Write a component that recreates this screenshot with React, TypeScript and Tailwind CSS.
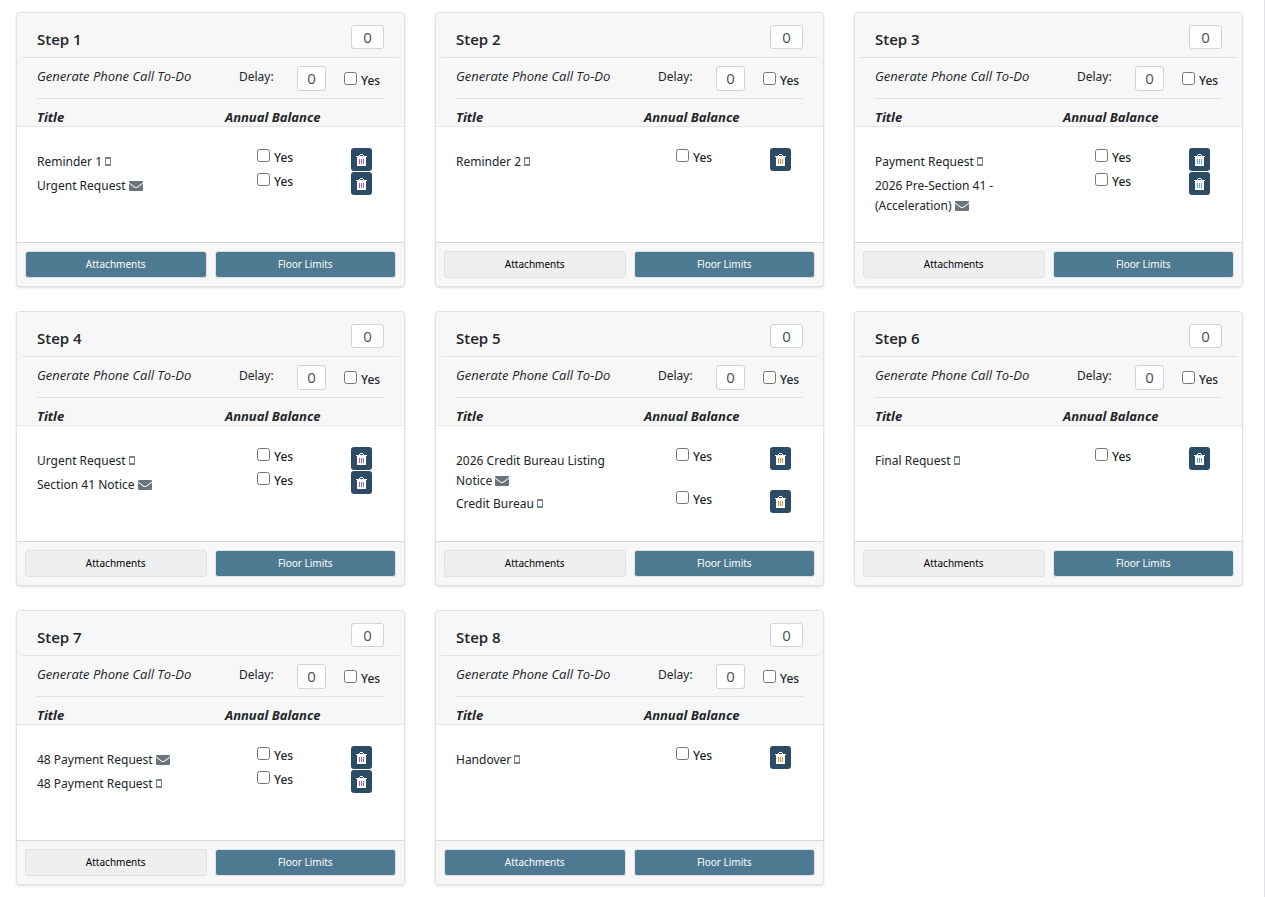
import { useState } from 'react';

type Channel = 'sms' | 'email';

interface Notice {
  title: string;
  channel: Channel;
}

interface Step {
  id: number;
  hasAttachments: boolean;
  notices: Notice[];
}

const steps: Step[] = [
  {
    id: 1,
    hasAttachments: true,
    notices: [
      { title: 'Reminder 1', channel: 'sms' },
      { title: 'Urgent Request', channel: 'email' },
    ],
  },
  {
    id: 2,
    hasAttachments: false,
    notices: [{ title: 'Reminder 2', channel: 'sms' }],
  },
  {
    id: 3,
    hasAttachments: false,
    notices: [
      { title: 'Payment Request', channel: 'sms' },
      { title: '2026 Pre-Section 41 - (Acceleration)', channel: 'email' },
    ],
  },
  {
    id: 4,
    hasAttachments: false,
    notices: [
      { title: 'Urgent Request', channel: 'sms' },
      { title: 'Section 41 Notice', channel: 'email' },
    ],
  },
  {
    id: 5,
    hasAttachments: false,
    notices: [
      { title: '2026 Credit Bureau Listing Notice', channel: 'email' },
      { title: 'Credit Bureau', channel: 'sms' },
    ],
  },
  {
    id: 6,
    hasAttachments: false,
    notices: [{ title: 'Final Request', channel: 'sms' }],
  },
  {
    id: 7,
    hasAttachments: false,
    notices: [
      { title: '48 Payment Request', channel: 'email' },
      { title: '48 Payment Request', channel: 'sms' },
    ],
  },
  {
    id: 8,
    hasAttachments: true,
    notices: [{ title: 'Handover', channel: 'sms' }],
  },
];

// Slat colour of the trash icon, one per grid column
const slatColors = ['#a05cbc', '#e0913c', '#5ea6d8'];

function TrashIcon({ slat }: { slat: string }) {
  return (
    <svg width="11" height="12" viewBox="0 0 11 12" shapeRendering="crispEdges" aria-hidden="true">
      <path d="M3 2V1h1V0h3v1h1v1h3v1H0V2zM4 1v1h3V1z" fill="#fff" fillRule="evenodd" />
      <path d="M1 3h9v9H1z" fill="#fff" />
      <path d="M3 5h1v5H3zM5 5h1v5H5zM7 5h1v5H7z" fill={slat} />
    </svg>
  );
}

function ChannelIcon({ channel }: { channel: Channel }) {
  if (channel === 'email') {
    return (
      <svg className="inline align-[-1px]" width="14" height="10" viewBox="0 0 14 10" aria-hidden="true">
        <path d="M0 1q0-1 1-1h12q1 0 1 1v.6L8.2 5.8q-1.2.8-2.4 0L0 1.600z" fill="#6c757d" />
        <path d="M0 2.600l5.200 3.900q1.800 1.200 3.600 0L14 2.600v6.400q0 1-1 1H1q-1 0-1-1z" fill="#6c757d" />
      </svg>
    );
  }
  return (
    <svg className="inline align-baseline" width="6" height="9" viewBox="0 0 6 9" aria-hidden="true">
      <path d="M0 0h6v9H0zM1 2v5h4V2z" fill="#7d858c" fillRule="evenodd" />
    </svg>
  );
}

function YesCheckbox({ label }: { label: string }) {
  const [checked, setChecked] = useState(false);
  return (
    <label className="flex items-start gap-1">
      <input
        type="checkbox"
        aria-label={label}
        checked={checked}
        onChange={(e) => setChecked(e.target.checked)}
        className="mt-px size-[13px]"
      />
      <span className="font-['Noto_Sans',sans-serif] text-[12px] leading-5 font-medium">Yes</span>
    </label>
  );
}

function NumberBox({ label, className }: { label: string; className: string }) {
  const [value, setValue] = useState('0');
  return (
    <input
      type="text"
      aria-label={label}
      value={value}
      onChange={(e) => setValue(e.target.value)}
      className={`rounded-[3px] border border-[#ced4da] bg-white text-center text-[15px] text-[#495057] ${className}`}
    />
  );
}

function FooterButton({ active, children }: { active: boolean; children: string }) {
  return (
    <button
      type="button"
      className={`h-[27px] flex-1 rounded-[3px] border border-[#dee2e6] pb-px font-['Noto_Sans',sans-serif] text-[10px] ${
        active ? 'bg-[#4e7a91] text-white' : 'bg-[#efefef] text-black'
      }`}
    >
      {children}
    </button>
  );
}

function StepCard({ step, slat }: { step: Step; slat: string }) {
  return (
    <section className="flex flex-col rounded border border-[#dee2e6] bg-white shadow-sm">
      <header className="rounded-t border-b border-[#e6e6e8] bg-[#f7f7f7]">
        <div className="mx-[5px] flex h-[45px] items-start justify-between border-b border-[#dee2e6] px-[15px] pt-3">
          <h2 className="text-[15px] leading-7 font-semibold">Step {step.id}</h2>
          <NumberBox label={`Step ${step.id} order`} className="h-6 w-[33px]" />
        </div>
        <div className="mx-5 flex h-[41px] items-start border-b border-[#dee2e6] pt-2">
          <span className="w-[202px] leading-5 italic">Generate Phone Call To-Do</span>
          <span className="w-[58px] font-['Noto_Sans',sans-serif] text-[12px] leading-[22px]">Delay:</span>
          <NumberBox label={`Step ${step.id} delay`} className="h-[25px] w-[29px] pb-px" />
          <div className="mt-[5px] ml-[18px]">
            <YesCheckbox label={`Step ${step.id} phone call`} />
          </div>
        </div>
        <div className="mx-5 flex h-[27px] items-start pt-2 font-bold italic">
          <span className="w-[188px] leading-5">Title</span>
          <span className="leading-5">Annual Balance</span>
        </div>
      </header>

      <div className="min-h-[115px] flex-1 px-5 pt-[21px]">
        {step.notices.map((notice, index) => (
          <div key={index} className="flex items-start">
            <p className="-mb-px w-[188px] pt-1 pr-4 font-['Noto_Sans',sans-serif] text-[12px] leading-5">
              {notice.title} <ChannelIcon channel={notice.channel} />
            </p>
            <div className="ml-8 w-[94px]">
              <YesCheckbox label={`${notice.title} annual balance`} />
            </div>
            <button
              type="button"
              aria-label={`Delete ${notice.title}`}
              className="mb-px flex h-[23px] w-[21px] items-center justify-center rounded-[3px] bg-[#2c4b66]"
            >
              <TrashIcon slat={slat} />
            </button>
          </div>
        ))}
      </div>

      <footer className="flex gap-2 rounded-b border-t border-[#d5d7d9] bg-[#f7f7f7] p-2">
        <FooterButton active={step.hasAttachments}>Attachments</FooterButton>
        <FooterButton active>Floor Limits</FooterButton>
      </footer>
    </section>
  );
}

export default function App() {
  return (
    <main className="min-h-screen border-r border-[#dee2e6] bg-white pt-3 pr-[21px] pl-4 font-['Open_Sans',sans-serif] text-[13px] text-[#212529]">
      <div className="grid grid-cols-3 gap-x-[30px] gap-y-6">
        {steps.map((step, index) => (
          <StepCard key={step.id} step={step} slat={slatColors[index % slatColors.length]} />
        ))}
      </div>
    </main>
  );
}
